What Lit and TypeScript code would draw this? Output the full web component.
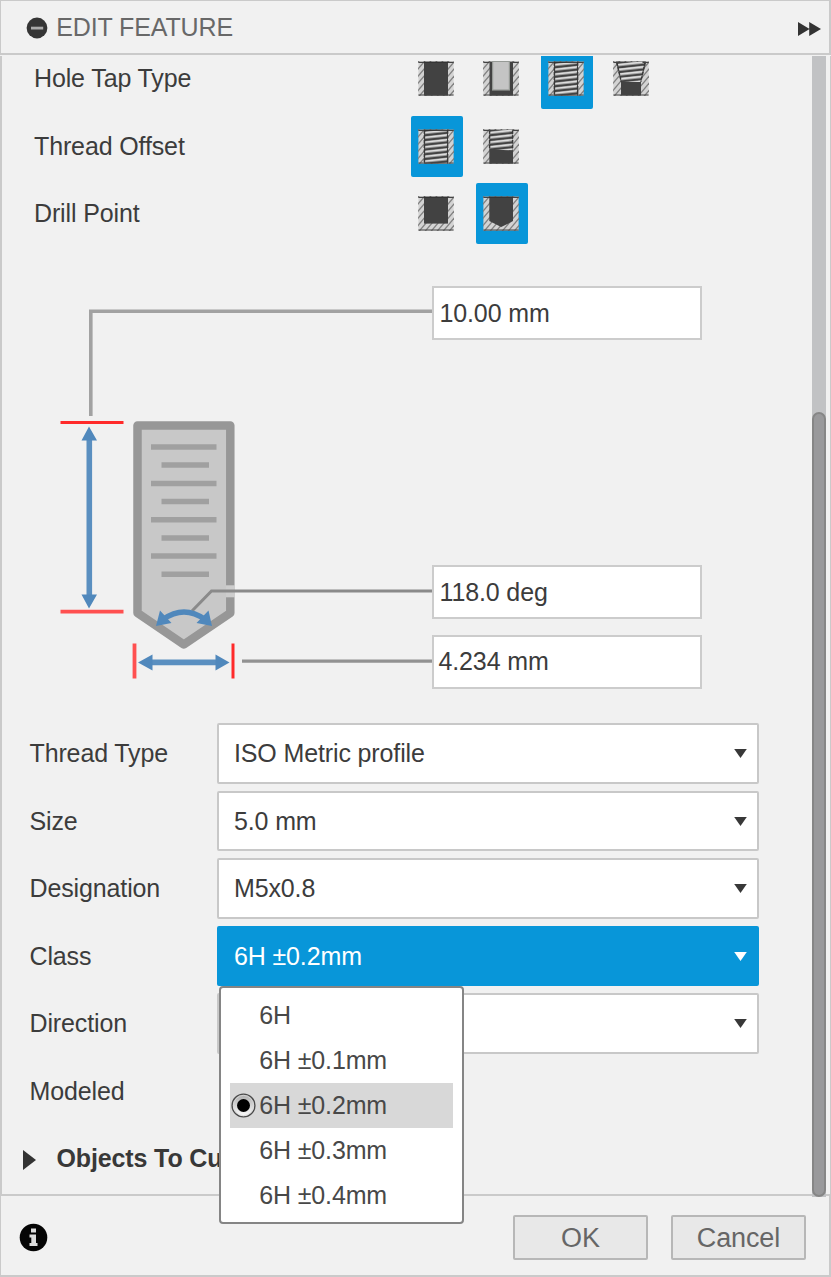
import { LitElement, html, svg, css, nothing } from "lit";
import { customElement, property, state } from "lit/decorators.js";
import { classMap } from "lit/directives/class-map.js";

type IconKind = "simple" | "clearance" | "tapped" | "taper" | "partial" | "flat" | "angle";

/** Cross-section glyph of a hole: hatched walls round a dark or threaded bore. */
@customElement("hole-icon")
class HoleIcon extends LitElement {
  static styles = css`
    :host { display: block; width: 36px; height: 35px; }
    svg { display: block; }
  `;

  @property() kind: IconKind = "simple";

  private hatch() {
    const lines = [];
    for (let i = -8; i < 16; i++) {
      lines.push(svg`<path d="M${i * 6 - 30} 36 L${i * 6 + 2} -2"/>`);
    }
    return svg`<g stroke="#808080" stroke-width="1.3">${lines}</g>`;
  }

  private threads(clip: string, count: number) {
    const turns = [];
    for (let i = 0; i < count; i++) {
      const y = 2 + i * 4.75;
      turns.push(svg`
        <path d="M5 ${y + 1.5} L31 ${y - 1.3}" stroke="#9c9c9c" stroke-width="2.9"/>
        <path d="M5 ${y + 1.2} L31 ${y - 1.6}" stroke="#dedede" stroke-width="1.4"/>`);
    }
    return svg`<g clip-path=${`url(#${clip})`}>${turns}</g>`;
  }

  private bore() {
    const dark = "#424242";
    switch (this.kind) {
      case "clearance":
        return svg`<rect x="6.5" width="23.5" height="34" fill=${dark}/>
          <rect x="9.6" y="-.2" width="16.8" height="28.6" fill="#c4c4c4" stroke="#969a96" stroke-width="1.2"/>`;
      case "tapped":
        return svg`<rect x="6" width="24" height="34" fill=${dark}/>
          <clipPath id="full"><rect x="7" y="0" width="22" height="34"/></clipPath>
          ${this.threads("full", 9)}
          <path d="M6.4 1V34M29.6 1V34" stroke="#383838" stroke-width="1.5" stroke-dasharray="3.2 1.5"/>`;
      case "partial":
        return svg`<rect x="6.3" width="23.7" height="34" fill=${dark}/>
          <clipPath id="part"><path d="M7 0H29.5V21L7 19.5Z"/></clipPath>
          ${this.threads("part", 5)}
          <path d="M6.6 1V20M29.6 1V20" stroke="#383838" stroke-width="1.4" stroke-dasharray="3.2 1.5"/>`;
      case "taper":
        return svg`<path d="M3 0H33L28 21V34H8V21Z" fill=${dark}/>
          <clipPath id="cone"><path d="M4.5 0H31.5L27.5 20.5H8.5Z"/></clipPath>
          ${this.threads("cone", 5)}
          <path d="M3.8 1L8.2 20M32.2 1L27.8 20" stroke="#383838" stroke-width="1.4" stroke-dasharray="3.2 1.5"/>`;
      case "flat":
        return svg`<path d="M6 0H30V27H6Z" fill=${dark}/>`;
      case "angle":
        return svg`<path d="M6.3 0H30V24.5L18.2 30.5L6.3 24.5Z" fill=${dark}/>`;
      default:
        return svg`<rect x="6" width="24" height="34" fill=${dark}/>`;
    }
  }

  render() {
    return html`<svg width="36" height="35" viewBox="0 -.6 36 35">
      <rect x=".4" width="35.2" height="34" fill="#d3d3d3"/>
      ${this.hatch()}${this.bore()}
      <path d="M.4 .8H6.5M29.5 .8H35.6M.4 33.4H35.6" stroke="#444" stroke-width="1.1"/>
      ${this.kind === "clearance" || this.kind === "taper" || this.kind === "partial"
        ? nothing
        : svg`<path d="M6 .8H30" stroke="#333" stroke-width="1"/>`}
    </svg>`;
  }
}

@customElement("option-row")
class OptionRow extends LitElement {
  static styles = css`
    :host { display: grid; flex: none; grid-template-columns: 376.6px 1fr; align-items: center; height: 67.5px; }
    .tiles { display: flex; gap: 13.2px; }
    .tile { width: 52px; height: 61px; display: grid; place-items: center; padding: 0 2px 0 0; box-sizing: border-box; border-radius: 2px; }
    .on { background: #0896d9; }
  `;

  @property() label = "";
  @property({ attribute: false }) icons: IconKind[] = [];
  @property({ type: Number }) selected = 0;

  render() {
    return html`<span>${this.label}</span>
      <div class="tiles">
        ${this.icons.map((k, i) => html`
          <div class=${classMap({ tile: true, on: i === this.selected })}><hole-icon .kind=${k}></hole-icon></div>`)}
      </div>`;
  }
}

@customElement("hole-diagram")
class HoleDiagram extends LitElement {
  static styles = css`
    :host { display: block; }
    svg { display: block; }
  `;

  render() {
    const grooves = [447, 465, 483.5, 501.5, 519.8, 538, 556, 574.3];
    return html`<svg width="432" height="440" viewBox="2 270 432 440" fill="none">
      <g stroke="#a2a2a2" stroke-width="3.6">
        <path d="M434 311.3H90.8V416"/>
      </g>
      <path d="M137.5 425.5H230.3V613L183.8 644.5L137.5 613Z" fill="#c8c8c8" stroke="#979797" stroke-width="8.5" stroke-linejoin="round"/>
      <g stroke="#a0a0a0" stroke-width="5.6">
        ${grooves.map((y, i) => svg`<path d=${i % 2 ? `M161.5 ${y}H209` : `M151 ${y}H216.5`}/>`)}
      </g>
      <path d="M226 591.3H235" stroke="#cdcdcd" stroke-width="12"/>
      <path d="M434 591H211.5L192 611" stroke="#8a8a8a" stroke-width="3"/>
      <path d="M434 661.2H242" stroke="#929292" stroke-width="3.2"/>
      <g stroke="#ff2a2a" stroke-width="3">
        <path d="M60.5 422.4H123.5"/>
        <path d="M60.5 611.6H123.5M134.5 643.5V678.5" stroke="#ff5050" stroke-width="3.8"/>
        <path d="M233 643.5V678.5"/>
      </g>
      <g stroke="#5a8fc0" stroke-width="5.6">
        <path d="M89.3 438V598M150 662.4H218"/>
        <path d="M163 619.5Q184 604.5 205 619.5" stroke="#5088bc"/>
      </g>
      <g fill="#5088bc">
        <path d="M89 426.5L97 440.5H81.5ZM89 608.5L97 594.5H81.5Z"/>
        <path d="M138 662.4L152.5 654.5V670.5ZM229.5 662.4L215.5 654.5V670.5Z"/>
        <path d="M156 626L160 610.5L171.5 623ZM212 626L208.5 610.5L196.5 623Z"/>
      </g>
    </svg>`;
  }
}

@customElement("select-row")
class SelectRow extends LitElement {
  static styles = css`
    :host { display: grid; grid-template-columns: 187.2px 542px; align-items: center; height: 67.5px; }
    .label { padding-top: 1px; }
    .box {
      position: relative; height: 60.5px; box-sizing: border-box; border: 2px solid #c8c8c8; border-radius: 2px;
      background: #fff; display: flex; align-items: center; justify-content: space-between;
      padding: 1px 10px 0 15.3px;
    }
    .open { background: #0896d9; border-color: #0896d9; color: #fff; }
    .arrow { display: block; }
    .menu {
      position: absolute; left: 0; top: 58.5px; z-index: 2; width: 245px; height: 238px; box-sizing: border-box;
      border: 2px solid #858585; border-radius: 4px; background: #fff; color: #484848; padding: 5px 9px;
    }
    .item { height: 45px; display: grid; grid-template-columns: 29.5px 1fr; align-items: center; }
    .current { background: #d8d8d8; }
    .text { grid-column: 2; white-space: nowrap; }
    .radio { grid-column: 1; grid-row: 1; display: block; margin-left: 1px; }
  `;

  @property() label = "";
  @property() value = "";
  @property({ attribute: false }) options: string[] = [];
  @property({ type: Boolean }) open = false;

  private radio() {
    return html`<svg class="radio" width="26" height="26" viewBox="0 0 26 26">
      <defs><linearGradient id="r" x2="0" y2="1"><stop offset="0" stop-color="#aaa"/><stop offset="1" stop-color="#fff"/></linearGradient></defs>
      <circle cx="12.5" cy="12.5" r="11.4" fill="url(#r)" stroke="#4a4a4a" stroke-width="1.4"/>
      <circle cx="12.5" cy="12.5" r="10.1" stroke="#d8d8d8" stroke-width=".9" fill="none"/>
      <circle cx="12.5" cy="12.5" r="6.5" fill="#000"/>
    </svg>`;
  }

  render() {
    return html`<span class="label">${this.label}</span>
      <div class=${classMap({ box: true, open: this.open })}>
        <span>${this.value}</span>
        <svg class="arrow" width="13" height="9" viewBox="0 0 13 9"><path d="M.2 0H12.8L6.5 9Z" fill=${this.open ? "#fff" : "#383838"}/></svg>
        ${this.open
          ? html`<div class="menu">
              ${this.options.map((o) => html`
                <div class=${classMap({ item: true, current: o === this.value })}>
                  ${o === this.value ? this.radio() : nothing}<span class="text">${o}</span>
                </div>`)}
            </div>`
          : nothing}
      </div>`;
  }
}

@customElement("app-root")
class AppRoot extends LitElement {
  static styles = css`
    :host {
      display: grid; grid-template-rows: 55px 1139px 83px; width: 831px; height: 1277px; box-sizing: border-box;
      background: #f1f1f1; color: #3c3c3c; font: 25px "Liberation Sans", Arial, sans-serif; letter-spacing: -.13px;
      overflow: hidden;
    }
    header {
      display: flex; align-items: center; box-sizing: border-box; color: #686868;
      border: solid #cacaca; border-width: 1px 2px 2px 1px; padding: 0 8px 0 25px; line-height: 1;
    }
    .title { flex: 1; margin-left: 8.3px; }
    .collapse, .dock, .info { display: block; flex: none; }
    .collapse { margin-top: 1px; }
    .dock { margin-top: 4px; }
    main {
      display: grid; grid-template-columns: 810px 14px; margin-top: 1px; box-sizing: border-box;
      border-left: 2px solid #cacaca; border-right: 1px solid #cacaca; justify-content: start;
    }
    .content { height: 1138px; position: relative; z-index: 1; }
    .options { height: 191.5px; padding-left: 32px; overflow: hidden; display: flex; flex-direction: column; justify-content: flex-end; }
    .measure { display: grid; grid-template-columns: 430px 270px; height: 472px; }
    .drawing { margin: 22.5px 0 0; }
    .fields { display: flex; flex-direction: column; padding-top: 38.5px; }
    .field {
      box-sizing: border-box; height: 54px; border: 2px solid #cccccc; background: #fff; display: flex;
      align-items: center; padding-left: 5.5px; flex: none;
    }
    .angle { margin-top: 225px; }
    .diameter { margin-top: 16px; padding: 0 0 1px 4.5px; }
    .selects { padding-left: 27.5px; }
    .modeled { height: 67.5px; display: flex; align-items: center; padding-top: 1px; box-sizing: border-box; }
    .group { display: flex; align-items: center; height: 67.5px; font-weight: bold; padding-left: 21px; gap: 20.5px; color: #383838; }
    .marker { margin-top: 3px; }
    .track { background: #c1c2c4; height: 1141px; display: flex; flex-direction: column; justify-content: flex-end; position: relative; z-index: 1; }
    .thumb {
      height: 785px; box-sizing: border-box; border: 2px solid #868686; border-radius: 7px; background: #99999b;
    }
    footer {
      display: flex; align-items: center; box-sizing: border-box; border: solid #cacaca; border-width: 2px 2px 2px 1px;
      padding: 4px 23px 0 18px; gap: 23px; color: #666; font-size: 27px; line-height: 1;
    }
    .info { margin-right: auto; }
    .btn {
      width: 135px; height: 45px; box-sizing: border-box; border: 2px solid #b7b7b7; border-radius: 2px; background: #e8e8e8;
      display: grid; place-items: center; padding-top: 1px;
    }
  `;

  @state() private threadClass = "6H ±0.2mm";

  render() {
    return html`
      <header>
        <svg class="collapse" width="22" height="22" viewBox="0 0 22 22"><circle cx="11" cy="11" r="10.4" fill="#353535"/><rect x="5" y="9.7" width="12.2" height="2.8" fill="#aaa"/></svg>
        <span class="title">EDIT FEATURE</span>
        <svg class="dock" width="23" height="14" viewBox="0 0 23 14"><path d="M0 0L11.6 7L0 14ZM11.2 0L23 7L11.2 14Z" fill="#333"/></svg>
      </header>
      <main>
        <div class="content">
          <div class="options">
            <option-row label="Hole Tap Type" .icons=${["simple", "clearance", "tapped", "taper"]} .selected=${2}></option-row>
            <option-row label="Thread Offset" .icons=${["tapped", "partial"]} .selected=${0}></option-row>
            <option-row label="Drill Point" .icons=${["flat", "angle"]} .selected=${1}></option-row>
          </div>
          <div class="measure">
            <hole-diagram class="drawing"></hole-diagram>
            <div class="fields">
              <div class="field">10.00 mm</div>
              <div class="field angle">118.0 deg</div>
              <div class="field diameter">4.234 mm</div>
            </div>
          </div>
          <div class="selects">
            <select-row label="Thread Type" value="ISO Metric profile"></select-row>
            <select-row label="Size" value="5.0 mm"></select-row>
            <select-row label="Designation" value="M5x0.8"></select-row>
            <select-row label="Class" .value=${this.threadClass} open
              .options=${["6H", "6H ±0.1mm", "6H ±0.2mm", "6H ±0.3mm", "6H ±0.4mm"]}></select-row>
            <select-row label="Direction"></select-row>
            <div class="modeled">Modeled</div>
          </div>
          <div class="group">
            <svg class="marker" width="13" height="20" viewBox="0 0 13 20"><path d="M0 0L13 10L0 20Z" fill="#333"/></svg>
            <span>Objects To Cut</span>
          </div>
        </div>
        <div class="track"><div class="thumb"></div></div>
      </main>
      <footer>
        <svg class="info" width="29" height="29" viewBox="0 0 29 29"><circle cx="14.5" cy="14.5" r="13.8" fill="#050505"/>
          <path d="M12 5.5H17V9.5H12ZM10.5 11.5H17V20H18.5V23H10.5V20H12.3V14.5H10.5Z" fill="#ddd"/></svg>
        <div class="btn">OK</div>
        <div class="btn">Cancel</div>
      </footer>`;
  }
}
